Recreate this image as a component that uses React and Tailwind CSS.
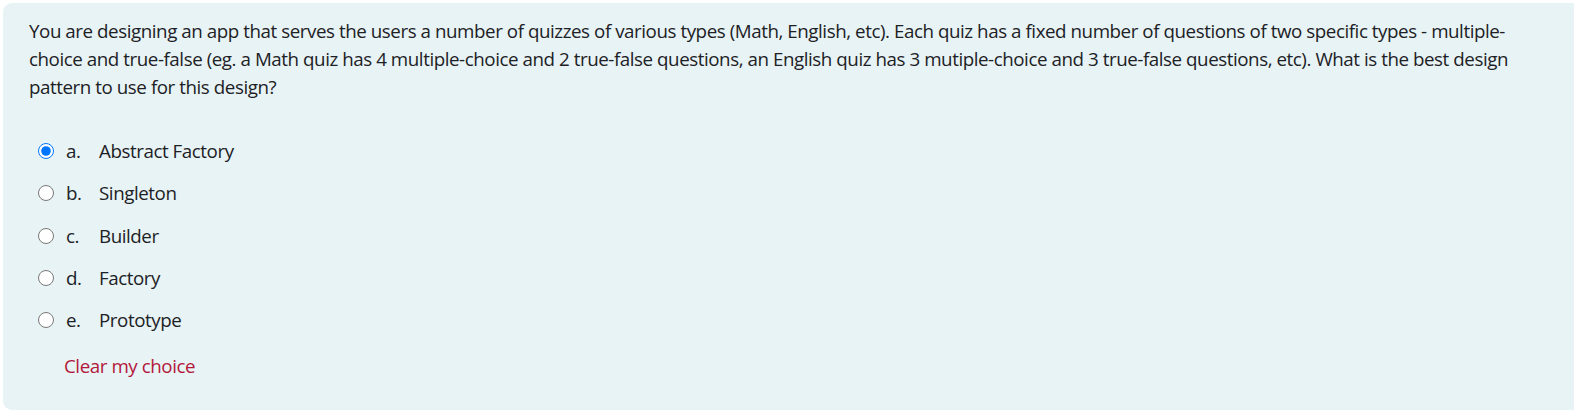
import React from "react";

const lines = [
  "You are designing an app that serves the users a number of quizzes of various types (Math, English, etc). Each quiz has a fixed number of questions of two specific types - multiple-",
  "choice and true-false (eg. a Math quiz has 4 multiple-choice and 2 true-false questions, an English quiz has 3 mutiple-choice and 3 true-false questions, etc). What is the best design",
  "pattern to use for this design?",
];

const options = [
  ["a.", "Abstract Factory", true],
  ["b.", "Singleton", false],
  ["c.", "Builder", false],
  ["d.", "Factory", false],
  ["e.", "Prototype", false],
];

export default function App() {
  return (
    <div className="w-[1574px] h-[416px] bg-white overflow-hidden pt-[3px] pl-[3px]">
      <div
        className="w-[1580px] rounded-[9px] bg-[#e7f3f5] pl-[26px] pt-[14px] pb-[30px] text-[#1d2125] text-[18.75px] leading-[28px] tracking-[-0.44px]"
        style={{ fontFamily: '"Open Sans", "Noto Sans", sans-serif' }}
      >
        <div>
          {lines.map((l, i) => (
            <div key={i} className="whitespace-nowrap">
              {l}
            </div>
          ))}
        </div>
        <div className="mt-[29px] flex flex-col">
          {options.map(([k, label, checked]) => (
            <label key={k} className="flex items-center h-[42.3px] pl-[9px]">
              <input
                type="radio"
                name="q"
                defaultChecked={checked}
                className="w-[16px] h-[16px] m-0 accent-[#0075ff]"
              />
              <span className="ml-[12px] w-[33px]">{k}</span>
              <span>{label}</span>
            </label>
          ))}
        </div>
        <div className="mt-[11px] pl-[35px] text-[#b3173b]">Clear my choice</div>
      </div>
    </div>
  );
}
